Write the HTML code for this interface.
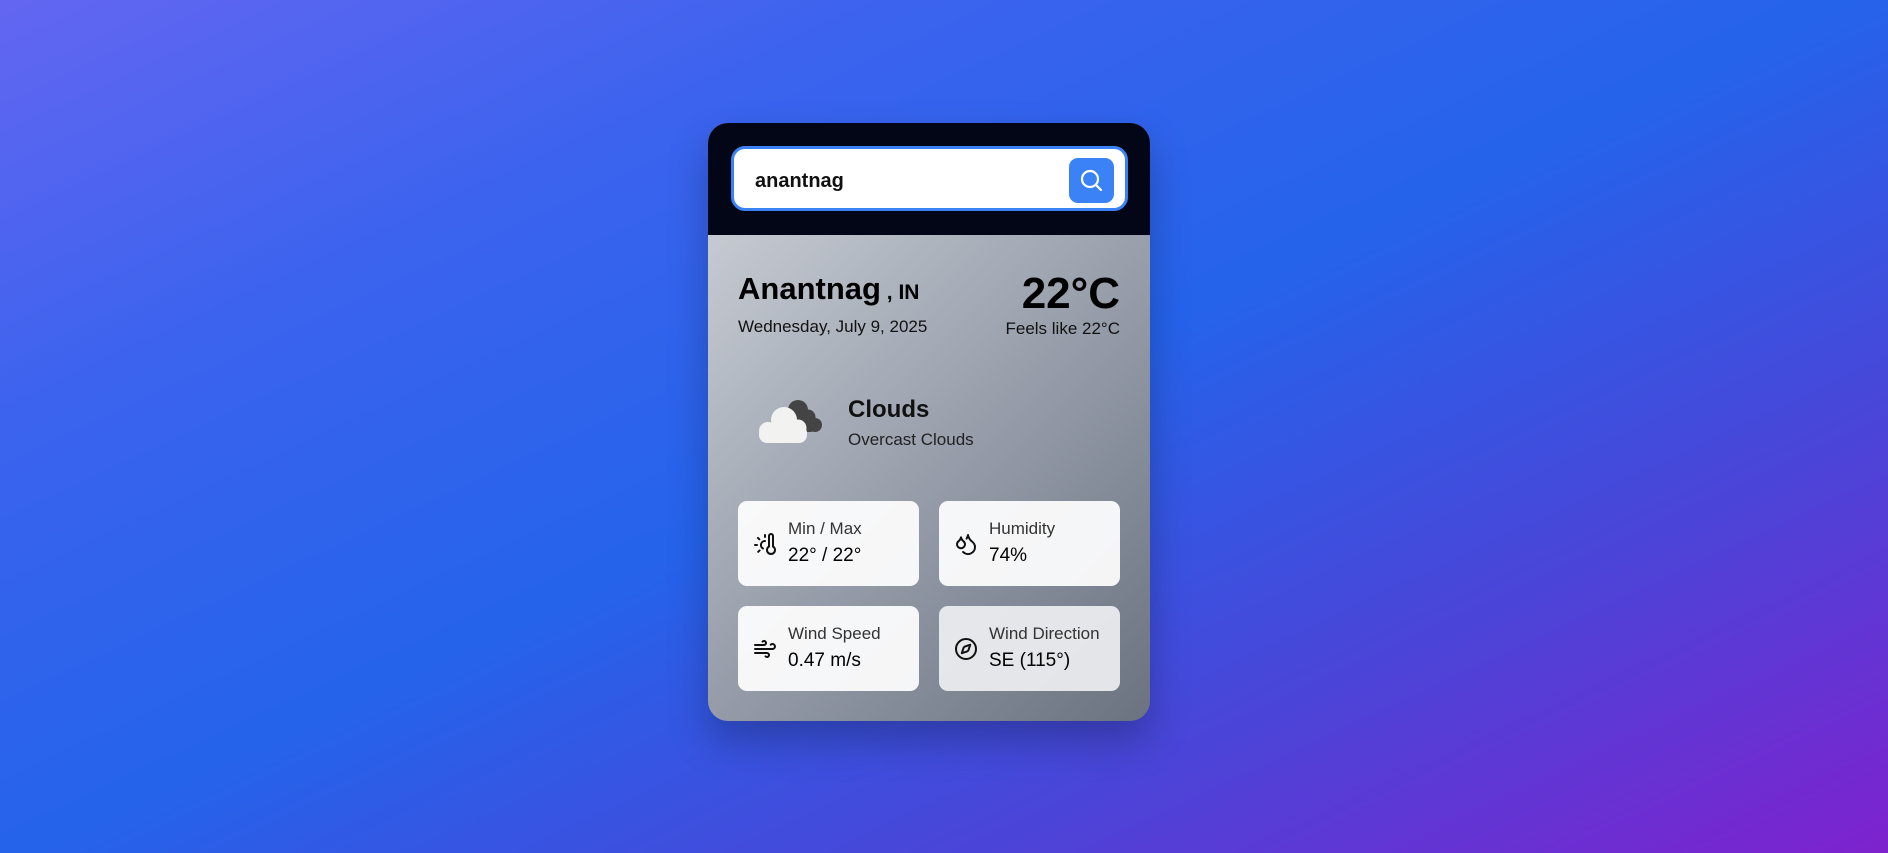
<!DOCTYPE html>
<html><head><style>
*{margin:0;padding:0;box-sizing:border-box}
body{width:1888px;height:853px;overflow:hidden;font-family:"Liberation Sans","DejaVu Sans",sans-serif;background:linear-gradient(155deg,#6366f1 0%,#3b63ee 25%,#2563eb 50%,#4a45d8 75%,#7e22ce 100%);position:relative}
.card{position:absolute;left:708px;top:123px;width:442px;height:598px;border-radius:20px;overflow:hidden;box-shadow:0 20px 40px rgba(0,0,0,.25);background:linear-gradient(135deg,#d1d5db 0%,#9ca3af 50%,#6b7280 100%)}
.head{position:absolute;left:0;top:0;width:442px;height:112px;background:#030616}
.search{position:absolute;left:23px;top:23px;width:397px;height:65px;background:#fff;border:3px solid #3b82f6;border-radius:14px}
.search span{position:absolute;left:21px;top:21px;font-size:20px;font-weight:bold;color:#111}
.btn{position:absolute;left:335px;top:9px;width:45px;height:45px;background:#3b82f6;border-radius:9px}
.abs{position:absolute;color:#000}
.tile{position:absolute;width:181px;height:85px;background:rgba(255,255,255,.92);border-radius:9px}
.tile svg{position:absolute;left:15px;top:31px}
.tile .l{position:absolute;left:50px;top:18px;font-size:17px;color:#333}
.tile .v{position:absolute;left:50px;top:44px;font-size:19px;color:#000}
</style></head><body>
<div class="card">
<div class="head"><div class="search"><span>anantnag</span>
<div class="btn"><svg width="45" height="45" viewBox="0 0 45 45" fill="none" stroke="#fff" stroke-width="2.2" stroke-linecap="round"><circle cx="21" cy="21" r="8"/><path d="M27 27l5 5"/></svg></div></div></div>
<div class="abs" style="left:30px;top:148px;font-size:31px;font-weight:bold">Anantnag<span style="font-size:21px"> , IN</span></div>
<div class="abs" style="left:30px;top:194px;font-size:17px;color:#111">Wednesday, July 9, 2025</div>
<div class="abs" style="right:30px;top:146px;font-size:44px;font-weight:bold">22°C</div>
<div class="abs" style="right:30px;top:196px;font-size:17px;color:#111">Feels like 22°C</div>
<svg class="abs" style="left:45px;top:276px" width="72" height="46" viewBox="0 0 72 46">
<g fill="#444"><circle cx="45" cy="11" r="10"/><circle cx="55" cy="18" r="7.5"/><circle cx="62" cy="26" r="7"/><rect x="40" y="16" width="24" height="17" rx="7"/></g>
<g fill="#f2f2f0"><circle cx="31" cy="21" r="13"/><circle cx="45" cy="29" r="8.5"/><circle cx="15" cy="32" r="9"/><rect x="6" y="26" width="48" height="18" rx="8"/></g></svg>
<div class="abs" style="left:140px;top:273px;font-size:24px;font-weight:bold;color:#111">Clouds</div>
<div class="abs" style="left:140px;top:307px;font-size:17px;color:#222">Overcast Clouds</div>
<div class="tile" style="left:30px;top:378px"><svg width="24" height="24" viewBox="0 0 24 24" fill="none" stroke="#111" stroke-width="2" stroke-linecap="round"><path d="M12 9a4 4 0 0 0-2 7.5M12 3v2M6.6 18.4l-1.4 1.4M20 4v10.54a4 4 0 1 1-4 0V4a2 2 0 0 1 4 0ZM4 13H2M6.34 7.34 4.93 5.93"/></svg><div class="l">Min / Max</div><div class="v">22° / 22°</div></div>
<div class="tile" style="left:231px;top:378px"><svg width="24" height="24" viewBox="0 0 24 24" fill="none" stroke="#111" stroke-width="2" stroke-linecap="round" stroke-linejoin="round"><path d="M7 16.3c2.2 0 4-1.83 4-4.05 0-1.16-.57-2.26-1.710-3.19S7.29 6.75 7 5.3c-.29 1.45-1.14 2.84-2.290 3.76S3 11.1 3 12.25c0 2.220 1.8 4.05 4 4.05z"/><path d="M12.56 6.6A10.97 10.97 0 0 0 14 3.02c.5 2.5 2 4.9 4 6.5s3 3.5 3 5.5a6.98 6.98 0 0 1-11.91 4.97"/></svg><div class="l">Humidity</div><div class="v">74%</div></div>
<div class="tile" style="left:30px;top:483px"><svg width="24" height="24" viewBox="0 0 24 24" fill="none" stroke="#111" stroke-width="2" stroke-linecap="round"><path d="M17.7 7.7a2.5 2.5 0 1 1 1.8 4.3H2M9.6 4.6A2 2 0 1 1 11 8H2M12.6 19.4A2 2 0 1 0 14 16H2"/></svg><div class="l">Wind Speed</div><div class="v">0.47 m/s</div></div>
<div class="tile" style="left:231px;top:483px;background:rgba(240,241,243,.9)"><svg width="24" height="24" viewBox="0 0 24 24" fill="none" stroke="#111" stroke-width="2" stroke-linejoin="round"><circle cx="12" cy="12" r="10"/><path d="m16.24 7.76-1.8 5.4a2 2 0 0 1-1.27 1.27l-5.41 1.8 1.8-5.4a2 2 0 0 1 1.27-1.270z"/></svg><div class="l">Wind Direction</div><div class="v">SE (115°)</div></div>
</div>
</body></html>
